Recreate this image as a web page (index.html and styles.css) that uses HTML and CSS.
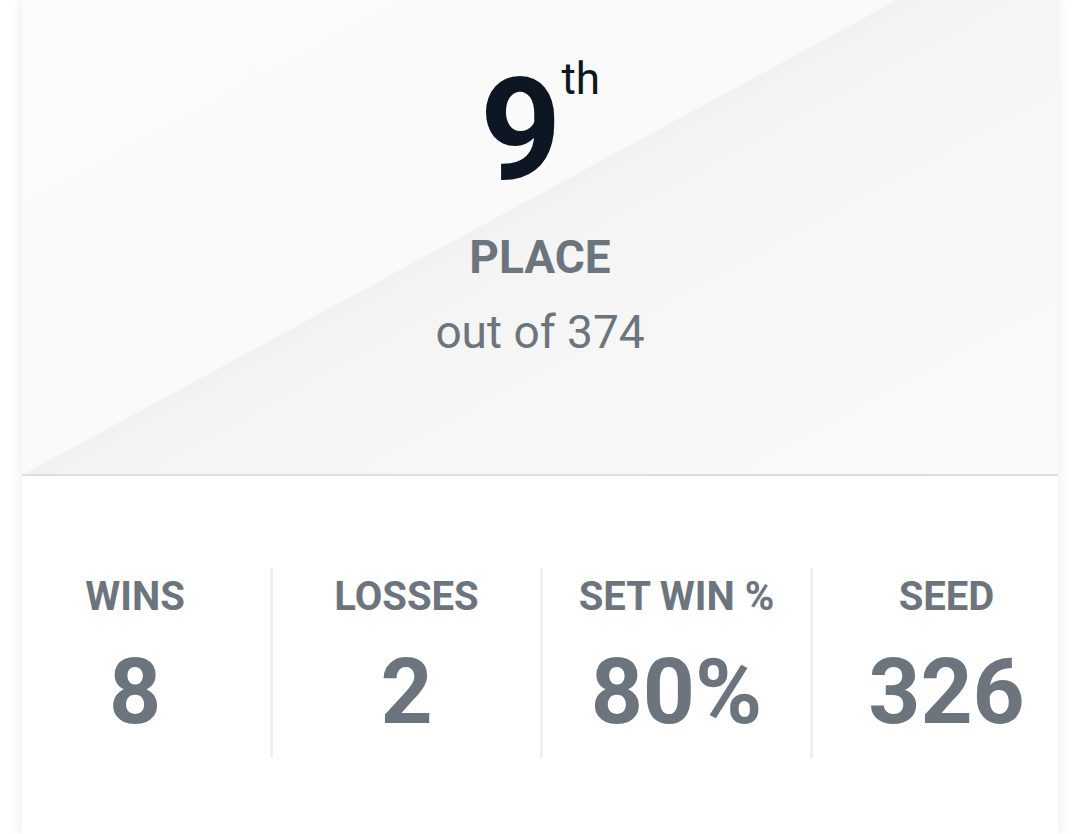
FILE: index.html
```html
<!DOCTYPE html>
<html lang="en">
<head>
<meta charset="utf-8">
<title>Placement</title>
<link rel="stylesheet" href="styles.css">
</head>
<body>
<div class="card">
  <section class="hero">
    <div class="rank"><span class="rank-num">9</span><sup class="rank-suffix">th</sup></div>
    <div class="place">PLACE</div>
    <div class="outof">out of 374</div>
  </section>
  <section class="stats">
    <div class="stat">
      <div class="stat-label">WINS</div>
      <div class="stat-value">8</div>
    </div>
    <div class="stat">
      <div class="stat-label">LOSSES</div>
      <div class="stat-value">2</div>
    </div>
    <div class="stat">
      <div class="stat-label">SET WIN %</div>
      <div class="stat-value">80%</div>
    </div>
    <div class="stat">
      <div class="stat-label">SEED</div>
      <div class="stat-value">326</div>
    </div>
  </section>
</div>
</body>
</html>
```
FILE: styles.css
```css
html, body {
  margin: 0;
  padding: 0;
  background: #ffffff;
  height: 100%;
  overflow: hidden;
}
body {
  font-family: Roboto, "Liberation Sans", Arial, sans-serif;
}
.card {
  margin-left: 22px;
  width: 1036px;
  min-height: 834px;
  background: #ffffff;
  box-shadow: 0 0 12px rgba(0, 0, 0, 0.09);
}
.hero {
  height: 476px;
  box-sizing: border-box;
  border-bottom: 2px solid #dedede;
  background: linear-gradient(151.5deg, #fbfbfb 0%, #fafafa 45.7%, #f1f1f1 46%, #f4f4f4 48%, #f7f7f7 70%, #fafafa 100%);
  text-align: center;
  padding-top: 60px;
}
.rank {
  display: flex;
  justify-content: center;
  align-items: flex-start;
  line-height: 1;
  color: #0c1723;
}
.rank-num {
  font-size: 142px;
  font-weight: 700;
  line-height: 142px;
}
.rank-suffix {
  font-size: 44px;
  font-weight: 400;
  line-height: 1;
  margin-left: 0;
  position: relative;
  top: -3px;
  vertical-align: baseline;
}
.place {
  margin-top: 32px;
  font-size: 46px;
  font-weight: 700;
  line-height: 1;
  color: #6c757d;
}
.outof {
  margin-top: 29px;
  font-size: 46px;
  font-weight: 400;
  line-height: 1;
  color: #6c757d;
}
.stats {
  display: grid;
  grid-template-columns: repeat(4, 270px);
  margin: 0 -22px;
  padding-top: 92px;
}
.stat {
  text-align: center;
  color: #6c757d;
  height: 190px;
  box-sizing: border-box;
  padding-top: 9px;
}
.stat + .stat {
  border-left: 3px solid #f0f0f0;
}
.stat-label {
  font-size: 40px;
  font-weight: 700;
  line-height: 1;
}
.stat-value {
  margin-top: 30px;
  font-size: 91px;
  font-weight: 700;
  line-height: 1;
}
```
